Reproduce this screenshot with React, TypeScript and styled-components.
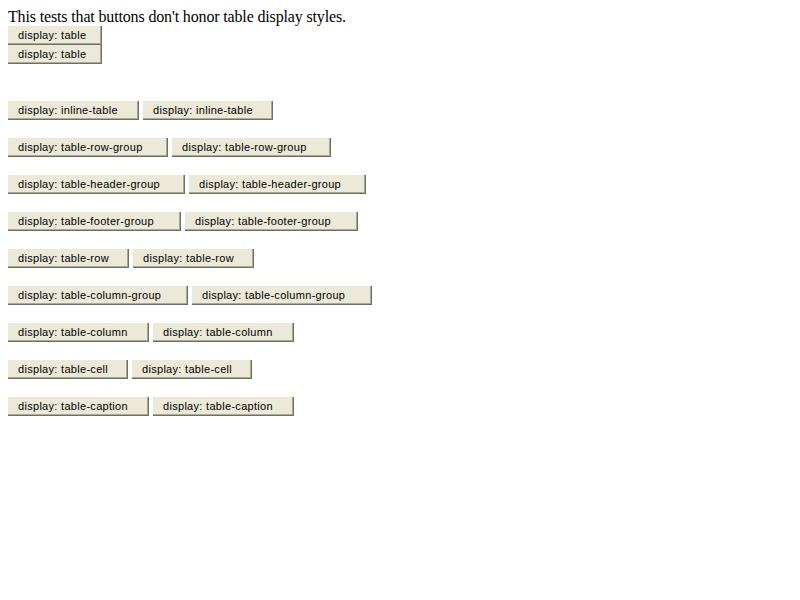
import styled, { createGlobalStyle } from "styled-components";

const GlobalStyle = createGlobalStyle`
  body {
    margin: 8px;
    background: #ffffff;
    color: #000000;
    font-family: "Liberation Serif", "Times New Roman", serif;
    font-size: 16px;
  }
`;

const Intro = styled.div`
  height: 18px;
  line-height: 18px;
  letter-spacing: -0.15px;
`;

const Stack = styled.div`
  display: flex;
  flex-direction: column;
`;

const Rows = styled.div`
  display: flex;
  flex-direction: column;
  gap: 18px;
  margin-top: 37px;
`;

const Row = styled.div`
  display: flex;
  gap: 4px;
`;

const Button = styled.button<{ $width: number }>`
  box-sizing: border-box;
  width: ${(p) => p.$width}px;
  height: 19px;
  margin: 0;
  padding: 0 0 0 10px;
  text-align: left;
  font-family: "Liberation Sans", Arial, sans-serif;
  font-size: 11px;
  line-height: 16px;
  letter-spacing: 0.3px;
  color: #000000;
  background: #ece9d8;
  border: none;
  border-right: 1px solid #716f64;
  border-bottom: 1px solid #716f64;
  box-shadow: inset -1px -1px 0 #aca899;
  white-space: nowrap;
`;

const rows: { label: string; widths: [number, number] }[] = [
  { label: "display: inline-table", widths: [131, 130] },
  { label: "display: table-row-group", widths: [160, 159] },
  { label: "display: table-header-group", widths: [177, 177] },
  { label: "display: table-footer-group", widths: [173, 173] },
  { label: "display: table-row", widths: [121, 121] },
  { label: "display: table-column-group", widths: [180, 180] },
  { label: "display: table-column", widths: [141, 141] },
  { label: "display: table-cell", widths: [120, 120] },
  { label: "display: table-caption", widths: [141, 141] },
];

const App = () => {
  return (
    <>
      <GlobalStyle />
      <Intro>This tests that buttons don't honor table display styles.</Intro>
      <Stack>
        <Button $width={94}>display: table</Button>
        <Button $width={94}>display: table</Button>
      </Stack>
      <Rows>
        {rows.map(({ label, widths }) => (
          <Row key={label}>
            <Button $width={widths[0]}>{label}</Button>
            <Button $width={widths[1]}>{label}</Button>
          </Row>
        ))}
      </Rows>
    </>
  );
};

export default App;
